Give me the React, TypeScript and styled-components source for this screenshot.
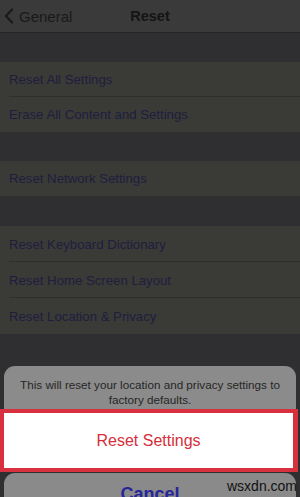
import React from 'react'
import styled, {createGlobalStyle} from 'styled-components'

const GlobalStyle = createGlobalStyle`
  html, body {
    margin: 0;
    padding: 0;
    background: #2f2f31;
  }
  body {
    font-family: "Liberation Sans", Arial, sans-serif;
  }
`

const Screen = styled.div`
  position: relative;
  width: 300px;
  height: 497px;
  overflow: hidden;
  background: #2f2f31;
`

const NavBar = styled.div`
  position: relative;
  height: 32px;
  display: flex;
  align-items: center;
  justify-content: center;
  background: #3a3a3a;
  border-bottom: 1px solid #262627;
`

const BackButton = styled.div`
  position: absolute;
  left: 4px;
  top: 0;
  bottom: 0;
  display: flex;
  align-items: center;
  gap: 5px;
  font-size: 15px;
  color: #19191c;
`

const Title = styled.div`
  font-size: 14.5px;
  font-weight: bold;
  color: #141416;
`

const Group = styled.div<{top: number}>`
  margin-top: ${({top}) => top}px;
  background: #3a3a37;
`

const Row = styled.div<{last?: boolean; h?: number}>`
  position: relative;
  height: ${({h}) => h ?? 35}px;
  display: flex;
  align-items: center;
  padding-left: 9px;
  font-size: 13.2px;
  color: #1e1e3e;

  &::after {
    content: '';
    display: ${({last}) => (last ? 'none' : 'block')};
    position: absolute;
    left: 9px;
    right: 0;
    bottom: 0;
    height: 1px;
    background: #2e2e2f;
  }
`

const Sheet = styled.div`
  position: absolute;
  left: 0;
  right: 0;
  top: 366px;
  display: flex;
  flex-direction: column;
`

const Card = styled.div`
  margin: 0 4px;
  background: #8b8b8b;
  border-radius: 11px 11px 0 0;
  padding: 11px 8px 8px;
  height: 24px;
  text-align: center;
  font-size: 11.7px;
  line-height: 15px;
  color: #262626;
`

const Highlight = styled.div`
  width: 289px;
  height: 55px;
  border: 4px solid #d9303f;
  border-right-width: 5px;
  background: #ffffff;
  display: flex;
  align-items: center;
  justify-content: center;
  font-size: 16px;
  color: #d52f3b;
`

const CancelCard = styled.div`
  margin: 1px 4px 0;
  height: 60px;
  background: #8a8a8a;
  border-radius: 11px;
  display: flex;
  justify-content: center;
  padding-top: 11px;
  font-size: 18px;
  font-weight: bold;
  color: #25259a;
`

const Watermark = styled.div`
  position: absolute;
  left: 227px;
  top: 478px;
  font-size: 14px;
  color: #111;
`

const App: React.FC = () => {
    return (
        <Screen>
            <GlobalStyle/>
            <NavBar>
                <BackButton>
                    <svg width="10" height="16" viewBox="0 0 10 16">
                        <path d="M8 1.5 L2 8 L8 14.5" fill="none" stroke="#19191c" strokeWidth="2.2"
                              strokeLinecap="round" strokeLinejoin="round"/>
                    </svg>
                    General
                </BackButton>
                <Title>Reset</Title>
            </NavBar>

            <Group top={29}>
                <Row>Reset All Settings</Row>
                <Row last>Erase All Content and Settings</Row>
            </Group>

            <Group top={29}>
                <Row last>Reset Network Settings</Row>
            </Group>

            <Group top={30}>
                <Row h={36}>Reset Keyboard Dictionary</Row>
                <Row h={36}>Reset Home Screen Layout</Row>
                <Row h={36} last>Reset Location &amp; Privacy</Row>
            </Group>

            <Sheet>
                <Card>This will reset your location and privacy settings to factory defaults.</Card>
                <Highlight>Reset Settings</Highlight>
                <CancelCard>Cancel</CancelCard>
            </Sheet>
            <Watermark>wsxdn.com</Watermark>
        </Screen>
    )
}

export default App
